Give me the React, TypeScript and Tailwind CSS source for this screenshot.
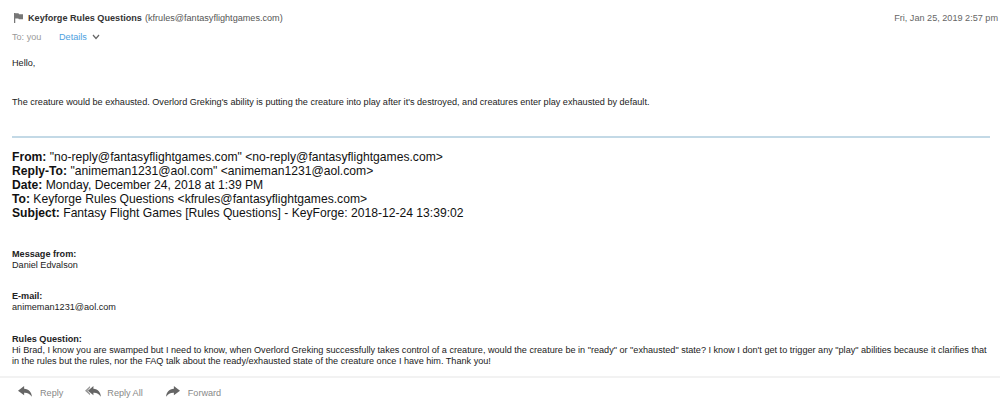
import React from 'react';

const ReplyIcon = () => (
  <svg width="14" height="11" viewBox="0 0 16 13" preserveAspectRatio="none" className="mb-[2px] fill-[#666]">
    <path d="M7 0 L0 5.5 L7 11 L7 8 C11 7.8 13.5 9.2 15.8 12.8 C15.8 7.5 12.5 3.4 7 3.2 Z" />
  </svg>
);

const ReplyAllIcon = () => (
  <svg width="16" height="11" viewBox="0 0 19 13" preserveAspectRatio="none" className="mb-[2px] fill-[#666]">
    <path d="M6 0 L0 5.5 L6 11 L6 9 L3 5.5 L6 2.2 Z" fill="#999" />
    <path d="M10 0 L3.5 5.5 L10 11 L10 8 C14 7.8 16.5 9.2 18.8 12.8 C18.8 7.5 15.5 3.4 10 3.2 Z" />
  </svg>
);

const ForwardIcon = () => (
  <svg width="14" height="11" viewBox="0 0 16 13" preserveAspectRatio="none" className="mb-[2px] fill-[#666]">
    <path d="M9 0 L16 5.5 L9 11 L9 8 C5 7.8 2.5 9.2 0.2 12.8 C0.2 7.5 3.5 3.4 9 3.2 Z" />
  </svg>
);

const FlagIcon = () => (
  <svg width="9" height="10" viewBox="0 0 10 12" preserveAspectRatio="none" className="fill-[#777]">
    <path d="M0 0 H1.4 V12 H0 Z M1.4 0.4 H5 L5.6 1.4 H10 V7.6 H5.4 L4.8 6.6 H1.4 Z" />
  </svg>
);

const headers = [
  { label: 'From:', value: '"no-reply@fantasyflightgames.com" <no-reply@fantasyflightgames.com>' },
  { label: 'Reply-To:', value: '"animeman1231@aol.com" <animeman1231@aol.com>' },
  { label: 'Date:', value: 'Monday, December 24, 2018 at 1:39 PM' },
  { label: 'To:', value: 'Keyforge Rules Questions <kfrules@fantasyflightgames.com>' },
  { label: 'Subject:', value: 'Fantasy Flight Games [Rules Questions] - KeyForge: 2018-12-24 13:39:02' },
];

const App: React.FC = () => {
  return (
    <div className="flex h-[407px] w-[1000px] flex-col overflow-hidden bg-white font-['Liberation_Sans',Arial,sans-serif] text-[9.12px] text-[#222]">
      <div className="flex-1 pl-3 pr-[10px] pt-[12px]">
        <div className="-mr-2 flex items-center justify-between leading-[12px]">
          <div className="flex items-center">
            <span className="ml-[2px] mr-[5px]"><FlagIcon /></span>
            <span className="font-bold text-[#333]">Keyforge Rules Questions</span>
            <span className="ml-[3px] text-[#555]">(kfrules@fantasyflightgames.com)</span>
          </div>
          <span className="text-[#666]">Fri, Jan 25, 2019 2:57 pm</span>
        </div>
        <div className="mt-[7px] flex items-center leading-[12px]">
          <span className="w-[47px] text-[#999]">To: you</span>
          <span className="text-[#4ea1e0]">Details</span>
          <svg width="8" height="6" viewBox="0 0 8 6" className="ml-[5px] fill-none stroke-[#666]">
            <path d="M1 1 L4 4.5 L7 1" strokeWidth="1.2" />
          </svg>
        </div>

        <p className="mt-[14px] leading-[12px]">Hello,</p>
        <p className="mt-[27px] leading-[12px]">
          The creature would be exhausted. Overlord Greking's ability is putting the creature into play after it's destroyed, and creatures enter play exhausted by default.
        </p>

        <div className="mt-[28px] border-t-2 border-[#c3d9e6]" />

        <div className="mt-[12px] text-[12.14px] leading-[14px] text-[#111]">
          {headers.map((h) => (
            <div key={h.label}>
              <span className="font-bold">{h.label}</span> {h.value}
            </div>
          ))}
        </div>

        <div className="mt-[29px] leading-[11px]">
          <div className="font-bold">Message from:</div>
          <div>Daniel Edvalson</div>
        </div>
        <div className="mt-[20px] leading-[11px]">
          <div className="font-bold">E-mail:</div>
          <div>animeman1231@aol.com</div>
        </div>
        <div className="mt-[21px] leading-[11px]">
          <div className="font-bold">Rules Question:</div>
          <div>
            Hi Brad, I know you are swamped but I need to know, when Overlord Greking successfully takes control of a creature, would the creature be in "ready" or "exhausted" state? I know I don't get to trigger any "play" abilities because it clarifies that in the rules but the rules, nor the FAQ talk about the ready/exhausted state of the creature once I have him. Thank you!
          </div>
        </div>
      </div>

      <div className="flex h-[31px] items-center border-t-2 border-[#f2f2f2] pl-[18px] text-[9.12px] text-[#888]">
        <ReplyIcon />
        <span className="ml-[8px] mt-[2px]">Reply</span>
        <span className="ml-[22px] flex"><ReplyAllIcon /></span>
        <span className="ml-[6px] mt-[2px]">Reply All</span>
        <span className="ml-[23px] flex"><ForwardIcon /></span>
        <span className="ml-[8px] mt-[2px]">Forward</span>
      </div>
    </div>
  );
};

export default App;
